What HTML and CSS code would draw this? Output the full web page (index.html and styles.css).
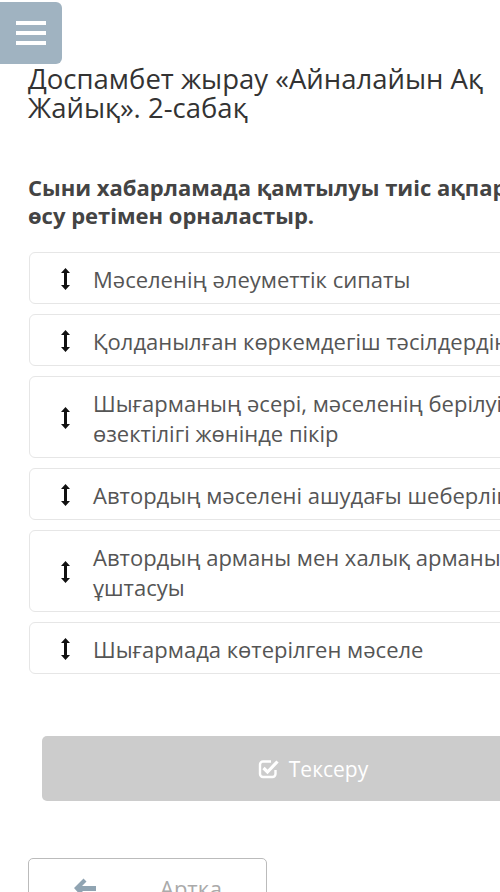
FILE: index.html
```html
<!DOCTYPE html>
<html lang="kk">
<head>
    <meta charset="UTF-8">
    <meta name="viewport" content="width=device-width, initial-scale=1.0">
    <title>Доспамбет жырау</title>
    <link rel="stylesheet" href="styles.css">
</head>
<body>
    <div class="page">
        <div class="topbar">
            <div class="menuBtn">
                <span class="menuLine"></span>
                <span class="menuLine"></span>
                <span class="menuLine"></span>
            </div>
        </div>
        <h1 class="title">Доспамбет жырау «Айналайын Ақ Жайық». 2-сабақ</h1>
        <p class="question">Сыни хабарламада қамтылуы тиіс ақпараттарды өсу ретімен орналастыр.</p>
        <div class="list">
            <div class="item">
                <svg class="dragIcon" width="9" height="22" viewBox="0 0 9 22"><path d="M4.5 0 L9 5 L6 5 L6 17 L9 17 L4.5 22 L0 17 L3 17 L3 5 L0 5 Z" fill="#111"/></svg>
                <span class="itemText">Мәселенің әлеуметтік сипаты</span>
            </div>
            <div class="item">
                <svg class="dragIcon" width="9" height="22" viewBox="0 0 9 22"><path d="M4.5 0 L9 5 L6 5 L6 17 L9 17 L4.5 22 L0 17 L3 17 L3 5 L0 5 Z" fill="#111"/></svg>
                <span class="itemText">Қолданылған көркемдегіш тәсілдердің рөлі</span>
            </div>
            <div class="item">
                <svg class="dragIcon" width="9" height="22" viewBox="0 0 9 22"><path d="M4.5 0 L9 5 L6 5 L6 17 L9 17 L4.5 22 L0 17 L3 17 L3 5 L0 5 Z" fill="#111"/></svg>
                <span class="itemText">Шығарманың әсері, мәселенің берілуі, өзектілігі жөнінде пікір</span>
            </div>
            <div class="item">
                <svg class="dragIcon" width="9" height="22" viewBox="0 0 9 22"><path d="M4.5 0 L9 5 L6 5 L6 17 L9 17 L4.5 22 L0 17 L3 17 L3 5 L0 5 Z" fill="#111"/></svg>
                <span class="itemText">Автордың мәселені ашудағы шеберлігі</span>
            </div>
            <div class="item">
                <svg class="dragIcon" width="9" height="22" viewBox="0 0 9 22"><path d="M4.5 0 L9 5 L6 5 L6 17 L9 17 L4.5 22 L0 17 L3 17 L3 5 L0 5 Z" fill="#111"/></svg>
                <span class="itemText">Автордың арманы мен халық арманының ұштасуы</span>
            </div>
            <div class="item">
                <svg class="dragIcon" width="9" height="22" viewBox="0 0 9 22"><path d="M4.5 0 L9 5 L6 5 L6 17 L9 17 L4.5 22 L0 17 L3 17 L3 5 L0 5 Z" fill="#111"/></svg>
                <span class="itemText">Шығармада көтерілген мәселе</span>
            </div>
        </div>
        <div class="checkWrap">
            <div class="checkBtn">
                <svg width="21" height="21" viewBox="0 0 21 21"><path d="M13 3.5 H5 A3 3 0 0 0 2 6.5 V16 A3 3 0 0 0 5 19 H14.5 A3 3 0 0 0 17.5 16 V12" fill="none" stroke="#fff" stroke-width="2.4"/><path d="M5.5 10 L9.5 14 L19.5 3.5" fill="none" stroke="#fff" stroke-width="3.2"/></svg>
                <span>Тексеру</span>
            </div>
        </div>
        <div class="nav">
            <div class="backBtn">
                <svg class="backIcon" width="22" height="20" viewBox="0 0 22 20"><path d="M0 10 L9.5 0.5 L12.5 3.5 L8 8 L22 8 L22 13 L8 13 L12.5 17.5 L9.5 20.5 Z" fill="#90a4b2"/></svg>
                <span class="backText">Артқа</span>
            </div>
        </div>
    </div>
</body>
</html>
```

FILE: styles.css
```css
*{margin:0;padding:0;box-sizing:border-box;}
html,body{
    height:100%;
    overflow:hidden;
    background:#fff;
}
body{
    font-family:"Open Sans","Noto Sans",sans-serif;
    color:#333;
}
.page{
    width:598px;
    padding-left:28px;
}
.topbar{
    padding-top:2px;
    margin-left:-28px;
}
.menuBtn{
    width:62px;
    height:62px;
    background:#a0b3c1;
    border-radius:0 6px 6px 0;
    display:flex;
    flex-direction:column;
    justify-content:center;
    align-items:center;
    gap:6px;
}
.menuLine{
    display:block;
    width:30px;
    height:4px;
    background:#fff;
}
.title{
    font-weight:400;
    font-size:27.5px;
    line-height:29px;
    color:#333;
    width:480px;
}
.question{
    margin-top:51px;
    font-weight:700;
    font-size:22px;
    line-height:28px;
    color:#444;
    width:600px;
}
.list{
    margin-top:23px;
    display:flex;
    flex-direction:column;
    gap:10px;
    padding-left:1px;
}
.item{
    display:flex;
    align-items:center;
    border:1px solid #e6e6e6;
    border-radius:6px;
    padding:11px 10px 9px 31px;
}
.dragIcon{
    flex:none;
    margin-right:23px;
}
.itemText{
    font-size:22px;
    line-height:30px;
    color:#555;
    width:480px;
}
.checkWrap{
    margin-top:62px;
    padding:0 14px;
}
.checkBtn{
    height:65px;
    background:#cccccc;
    border-radius:5px;
    display:flex;
    justify-content:center;
    align-items:center;
    gap:10px;
    color:#fff;
    font-size:21px;
}
.nav{
    margin-top:57px;
}
.backBtn{
    width:239px;
    height:60px;
    border:1px solid #bbb;
    border-radius:5px;
    display:flex;
    align-items:center;
    padding-left:45px;
}
.backIcon{
    flex:none;
}
.backText{
    margin-left:64px;
    font-size:22px;
    color:#aaa;
}
```
